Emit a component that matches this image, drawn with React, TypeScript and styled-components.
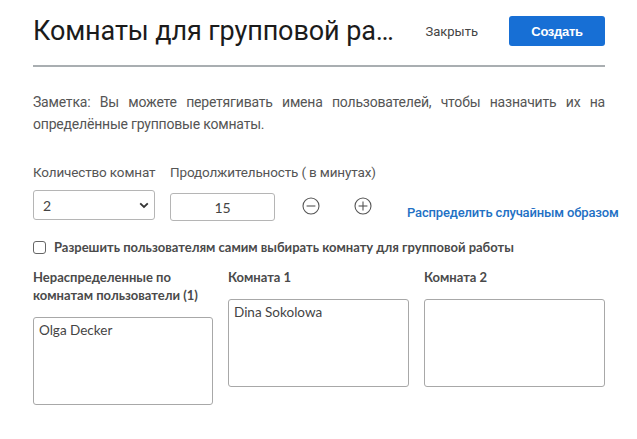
import React from "react";
import styled, { createGlobalStyle } from "styled-components";

const Global = createGlobalStyle`
  html, body { margin: 0; padding: 0; background: #fff; }
  body { font-family: Lato, "Noto Sans", sans-serif; color: #4a4a4a; }
  * { box-sizing: border-box; }
`;

const Page = styled.div`
  width: 637px;
  padding: 16px 32px 0 33px;
`;

const Header = styled.div`
  display: flex;
  align-items: center;
  height: 30px;
`;

const Title = styled.h1`
  flex: 1;
  min-width: 0;
  margin: 0;
  font-family: Roboto, "Liberation Sans", sans-serif;
  font-weight: 400;
  font-size: 27px;
  letter-spacing: -0.1px;
  color: #1b1b1b;
  white-space: nowrap;
  overflow: hidden;
  text-overflow: ellipsis;
  padding-right: 18px;
`;

const CloseLink = styled.button`
  flex-shrink: 0;
  background: none;
  border: none;
  padding: 0;
  font-family: Roboto, "Liberation Sans", sans-serif;
  font-size: 13px;
  color: #444;
  margin-right: 31px;
  cursor: pointer;
`;

const PrimaryButton = styled.button`
  flex-shrink: 0;
  width: 96px;
  height: 30px;
  border: none;
  border-radius: 3px;
  background: #176fd5;
  color: #fff;
  font-family: "Liberation Sans", Arial, sans-serif;
  font-weight: 700;
  font-size: 13px;
  letter-spacing: -0.3px;
  cursor: pointer;
`;

const Divider = styled.hr`
  margin: 19px 0 0 0;
  border: none;
  height: 2px;
  background: #a9aeb1;
`;

const Note = styled.p`
  margin: 24px 0 0 0;
  font-family: Roboto, "Liberation Sans", sans-serif;
  font-size: 14px;
  line-height: 22px;
  color: #555;
  text-align: justify;
  letter-spacing: -0.2px;
`;

const LabelsRow = styled.div`
  display: flex;
  gap: 15px;
  margin-top: 28px;
`;

const FieldLabel = styled.div<{ $w?: number }>`
  flex-shrink: 0;
  ${(p) => (p.$w ? `width: ${p.$w}px;` : "")}
  font-family: Roboto, "Liberation Sans", sans-serif;
  font-size: 13.5px;
  letter-spacing: -0.15px;
  line-height: 18px;
  color: #555;
  white-space: nowrap;
`;

const ControlsRow = styled.div`
  display: flex;
  align-items: flex-start;
  margin-top: 9px;
  & > * { flex-shrink: 0; }
`;

const SelectBox = styled.div`
  width: 122px;
  height: 30px;
  border: 1px solid #b5b5b5;
  border-radius: 3px;
  display: flex;
  align-items: center;
  padding: 0 5px 0 9px;
  justify-content: space-between;
  font-size: 14px;
  color: #444;
`;

const NumberBox = styled.div`
  width: 105px;
  height: 28px;
  margin: 3px 0 0 15px;
  border: 1px solid #b5b5b5;
  border-radius: 3px;
  display: flex;
  align-items: center;
  justify-content: center;
  font-size: 14px;
  color: #444;
`;

const IconButton = styled.button<{ $ml: number }>`
  margin: 7px 0 0 ${(p) => p.$ml}px;
  width: 18px;
  height: 18px;
  padding: 0;
  border: none;
  background: none;
  display: flex;
  cursor: pointer;
`;

const RandomLink = styled.a`
  margin: 15px 0 0 35px;
  font-family: Roboto, "Liberation Sans", sans-serif;
  font-size: 13px;
  font-weight: 500;
  letter-spacing: -0.15px;
  color: #2270c4;
  white-space: nowrap;
  cursor: pointer;
`;

const CheckRow = styled.label`
  display: flex;
  align-items: center;
  gap: 8px;
  margin-top: 18px;
  font-weight: 700;
  font-size: 13px;
  color: #4a4a4a;
`;

const CheckBox = styled.span`
  width: 13px;
  height: 13px;
  border: 1px solid #666;
  border-radius: 3px;
  background: #fff;
`;

const Columns = styled.div`
  display: grid;
  grid-template-columns: 180px 181px 181px;
  column-gap: 15px;
  margin-top: 13px;
`;

const Column = styled.div`
  display: flex;
  flex-direction: column;
`;

const ColumnLabel = styled.div`
  font-weight: 700;
  font-size: 13px;
  line-height: 18px;
  color: #4a4a4a;
  margin-bottom: 13px;
`;

const DropZone = styled.div`
  height: 88px;
  border: 1px solid #a8a8a8;
  border-radius: 3px;
  padding: 4px 5px;
  font-size: 13.5px;
  color: #444;
`;

const Chevron = () => (
  <svg width="10" height="7" viewBox="0 0 10 7">
    <path d="M1.2 1.3 L5 5 L8.8 1.3" fill="none" stroke="#333" strokeWidth="1.8" />
  </svg>
);

const CircleIcon = ({ plus }: { plus?: boolean }) => (
  <svg width="18" height="18" viewBox="0 0 18 18">
    <circle cx="9" cy="9" r="8" fill="none" stroke="#555" strokeWidth="1.1" />
    <path d="M4.6 9 H13.4" stroke="#555" strokeWidth="1.1" />
    {plus && <path d="M9 4.6 V13.4" stroke="#555" strokeWidth="1.1" />}
  </svg>
);

export default function App() {
  return (
    <>
      <Global />
      <Page>
        <Header>
          <Title>Комнаты для групповой работы</Title>
          <CloseLink>Закрыть</CloseLink>
          <PrimaryButton>Создать</PrimaryButton>
        </Header>
        <Divider />
        <Note>
          Заметка: Вы можете перетягивать имена пользователей, чтобы назначить их на
          определённые групповые комнаты.
        </Note>
        <LabelsRow>
          <FieldLabel $w={122}>Количество комнат</FieldLabel>
          <FieldLabel>Продолжительность ( в минутах)</FieldLabel>
        </LabelsRow>
        <ControlsRow>
          <SelectBox>
            <span>2</span>
            <Chevron />
          </SelectBox>
          <NumberBox>15</NumberBox>
          <IconButton $ml={27}>
            <CircleIcon />
          </IconButton>
          <IconButton $ml={34}>
            <CircleIcon plus />
          </IconButton>
          <RandomLink>Распределить случайным образом</RandomLink>
        </ControlsRow>
        <CheckRow>
          <CheckBox />
          Разрешить пользователям самим выбирать комнату для групповой работы
        </CheckRow>
        <Columns>
          <Column>
            <ColumnLabel>
              Нераспределенные по
              <br />
              комнатам пользователи (1)
            </ColumnLabel>
            <DropZone>Olga Decker</DropZone>
          </Column>
          <Column>
            <ColumnLabel>Комната 1</ColumnLabel>
            <DropZone>Dina Sokolowa</DropZone>
          </Column>
          <Column>
            <ColumnLabel>Комната 2</ColumnLabel>
            <DropZone />
          </Column>
        </Columns>
      </Page>
    </>
  );
}
